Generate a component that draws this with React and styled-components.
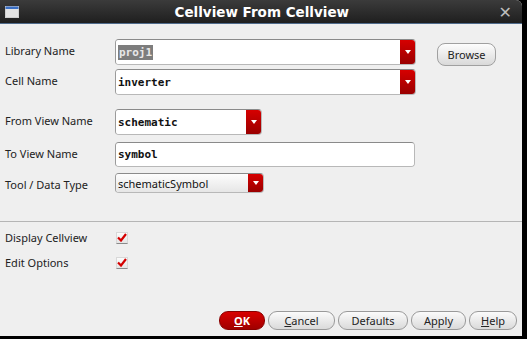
import React from "react";
import styled, { createGlobalStyle } from "styled-components";

const sans = '"Noto Sans", "DejaVu Sans", sans-serif';

const GlobalStyle = createGlobalStyle`
  html, body {
    margin: 0;
    padding: 0;
    background: #000;
  }
  body {
    width: 527px;
    height: 339px;
    overflow: hidden;
    font-family: ${sans};
  }
`;

const Screen = styled.div`
  width: 527px;
  height: 339px;
  display: flex;
  flex-direction: column;
  background: #000;
`;

const Window = styled.div`
  width: 522px;
  height: 336px;
  background: #efefef;
  display: flex;
  flex-direction: column;
  border-top-right-radius: 6px;
  overflow: hidden;
`;

const TitleBar = styled.div`
  height: 23px;
  border-bottom: 1px solid #4f6b8c;
  background: linear-gradient(#3b3b3b, #1f1f1f);
  display: flex;
  align-items: center;
  padding: 0 10px 0 5px;
  color: #fff;
`;

const Title = styled.div`
  flex: 1;
  text-align: center;
  font-family: "DejaVu Sans", sans-serif;
  font-weight: bold;
  font-size: 13.5px;
  padding-left: 6px;
`;

const Close = styled.div`
  font-size: 16px;
  color: #bdbdbd;
  font-weight: bold;
  line-height: 1;
`;

const Form = styled.div`
  flex: 1;
  display: flex;
  flex-direction: column;
  padding: 14px 5px 5px 5px;
`;

const Row = styled.div`
  display: grid;
  grid-template-columns: 110px auto 1fr;
  align-items: center;
  margin-top: ${(p) => p.$top || 0}px;
  height: ${(p) => p.$h}px;
`;

const Label = styled.div`
  font-size: 11px;
  line-height: 14px;
  color: #222;
  margin-top: ${(p) => (p.$dy ?? -2)}px;
`;

const Field = styled.div`
  width: ${(p) => p.$w}px;
  height: ${(p) => p.$h}px;
  box-sizing: border-box;
  display: flex;
  align-items: stretch;
  background: #fff;
  border: 1px solid #b8b8b8;
  border-top-color: #8a8a8a;
  border-left-color: #9a9a9a;
  border-radius: 4px;
  overflow: hidden;
`;

const FieldText = styled.div`
  flex: 1;
  display: flex;
  align-items: center;
  padding-left: 2px;
  font-family: ${(p) =>
    p.$mono ? '"DejaVu Sans Mono", "Liberation Mono", monospace' : sans};
  font-weight: ${(p) => (p.$mono ? "bold" : "normal")};
  font-size: 11px;
  color: #111;
  background: ${(p) => (p.$plain ? "linear-gradient(#fdfdfd, #e6e6e6)" : "#fff")};
`;

const Selected = styled.span`
  background: #7d7d7d;
  color: #e8e8e8;
  padding: 1px 1px;
`;

const Arrow = styled.div`
  width: 15px;
  background: linear-gradient(#d60000, #9a0000);
  display: flex;
  align-items: center;
  justify-content: center;
  &::after {
    content: "";
    border-left: 3px solid transparent;
    border-right: 3px solid transparent;
    border-top: 4px solid #fff;
  }
`;

const Browse = styled.button`
  margin-left: 21px;
  width: 59px;
  height: 23px;
  border: 1px solid #a0a0a0;
  border-radius: 8px;
  background: linear-gradient(#fdfdfd, #d9d9d9);
  font-family: ${sans};
  font-size: 11px;
  color: #222;
  padding: 0;
  justify-self: start;
  align-self: start;
  margin-top: 5px;
`;

const Separator = styled.div`
  height: 1px;
  background: #b5b5b5;
  margin: 28px -5px 0 -5px;
`;

const CheckRow = styled.div`
  display: grid;
  grid-template-columns: 111px auto;
  align-items: center;
  height: 25px;
  margin-top: ${(p) => p.$top || 0}px;
`;

const Box = styled.div`
  width: 12px;
  height: 12px;
  box-sizing: border-box;
  border: 1px solid #d8d8d8;
  border-bottom-color: #8a8a8a;
  background: linear-gradient(#fbfbfb, #e4e4e4);
  display: flex;
  align-items: center;
  justify-content: center;
`;

const Buttons = styled.div`
  margin-top: auto;
  display: flex;
  justify-content: flex-end;
  gap: 3px;
  padding: 0 0 1px 0;
`;

const Btn = styled.button`
  height: 19px;
  width: ${(p) => p.$w}px;
  border-radius: 9px;
  border: 1px solid ${(p) => (p.$primary ? "#8a0000" : "#9a9a9a")};
  background: ${(p) =>
    p.$primary ? "linear-gradient(#d80000, #a00000)" : "linear-gradient(#fbfbfb, #dadada)"};
  color: ${(p) => (p.$primary ? "#fff" : "#222")};
  font-weight: ${(p) => (p.$primary ? "bold" : "normal")};
  font-family: ${sans};
  font-size: 11px;
  padding: 0;
  u {
    text-decoration: underline;
  }
`;

const Check = () => (
  <Box>
    <svg width="10" height="9" viewBox="0 0 10 9">
      <path d="M1 4.5 L4 7.5 L9 1" stroke="#d40000" strokeWidth="2.2" fill="none" />
    </svg>
  </Box>
);

const WinIcon = () => (
  <svg width="14" height="12" viewBox="0 0 14 12">
    <rect x="0.5" y="0.5" width="13" height="11" fill="#e4e4e4" stroke="#cfcfcf" />
    <rect x="0.5" y="0.5" width="13" height="2.5" fill="#3a6fc4" />
  </svg>
);

const Combo = ({ w, h, mono, plain, children }) => (
  <Field $w={w} $h={h}>
    <FieldText $mono={mono} $plain={plain}>{children}</FieldText>
    <Arrow />
  </Field>
);

export default function App() {
  return (
    <Screen>
      <GlobalStyle />
      <Window>
        <TitleBar>
          <WinIcon />
          <Title>Cellview From Cellview</Title>
          <Close>✕</Close>
        </TitleBar>
        <Form>
          <Row $h={26}>
            <Label>Library Name</Label>
            <Combo w={301} h={26} mono>
              <Selected>proj1</Selected>
            </Combo>
            <Browse>Browse</Browse>
          </Row>
          <Row $h={26} $top={5}>
            <Label>Cell Name</Label>
            <Combo w={301} h={26} mono>inverter</Combo>
          </Row>
          <Row $h={26} $top={14}>
            <Label>From View Name</Label>
            <Combo w={147} h={26} mono>schematic</Combo>
          </Row>
          <Row $h={25} $top={7}>
            <Label>To View Name</Label>
            <Field $w={300} $h={25}>
              <FieldText $mono>symbol</FieldText>
            </Field>
          </Row>
          <Row $h={20} $top={6}>
            <Label $dy={3}>Tool / Data Type</Label>
            <Combo w={149} h={20} plain>schematicSymbol</Combo>
          </Row>
          <Separator />
          <CheckRow $top={3}>
            <Label $dy={0}>Display Cellview</Label>
            <Check />
          </CheckRow>
          <CheckRow>
            <Label $dy={0}>Edit Options</Label>
            <Check />
          </CheckRow>
          <Buttons>
            <Btn $primary $w={46}><u>O</u>K</Btn>
            <Btn $w={67}><u>C</u>ancel</Btn>
            <Btn $w={70}>Defaults</Btn>
            <Btn $w={55}>Apply</Btn>
            <Btn $w={48}><u>H</u>elp</Btn>
          </Buttons>
        </Form>
      </Window>
    </Screen>
  );
}
